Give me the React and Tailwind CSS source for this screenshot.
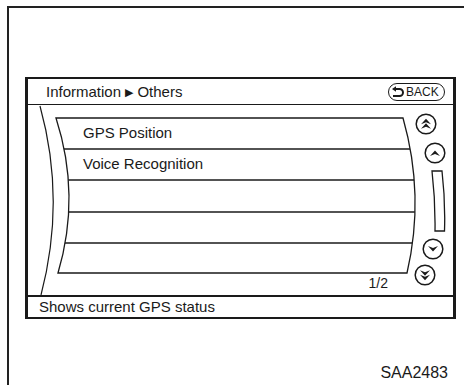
import React from 'react';

const ROW_LINES = [13, 44, 75, 107, 138, 168];
const FRAME =
  'M28 13 L375 13 Q397 90.5 379 168 L30 168 Q53 90.5 28 13 Z';

// arrowhead pointing up, centred on (11, cy)
const arrow = (cy) => `M6 ${cy + 3} L11 ${cy - 2.5} L16 ${cy + 3} L11 ${cy + 1} Z`;

function RoundBtn({ double, down, className }) {
  return (
    <svg width="22" height="22" viewBox="0 0 22 22" className={className}>
      <circle cx="11" cy="11" r="9.8" fill="white" stroke="#1a1a1a" strokeWidth="1.5" />
      <g transform={down ? 'rotate(180 11 11)' : undefined} fill="#1a1a1a">
        {double ? (
          <>
            <path d={arrow(8.2)} />
            <path d={arrow(12.8)} />
          </>
        ) : (
          <path d={arrow(11)} />
        )}
      </g>
    </svg>
  );
}

export default function App() {
  return (
    <div className="w-[464px] h-[385px] bg-white pl-[7px] pt-[6px] overflow-hidden text-[#1a1a1a] font-['Liberation_Sans',Arial,sans-serif]">
      <div className="h-full border-l-2 border-t-2 border-[#222] pl-[16px] pt-[69px]">
        {/* screen */}
        <div className="w-[431px] border-x-[3px] border-y-2 border-[#1a1a1a]">
          {/* header */}
          <div className="h-[26px] border-b border-[#1a1a1a] flex items-center justify-between pl-[18px] pr-[8px]">
            <span className="text-[15px] leading-none">
              Information <span className="text-[11px] relative -top-px">▶</span> Others
            </span>
            <div className="h-[18px] w-[57px] rounded-full border-[1.5px] border-[#1a1a1a] flex items-center pl-[2px] gap-[1px]">
              <svg width="14" height="12" viewBox="0 0 14 12">
                <path d="M4 3 H8.5 A3.5 3.5 0 0 1 8.5 10 H2" fill="none" stroke="#1a1a1a" strokeWidth="2" />
                <path d="M1 3 L5 0.2 L5 5.8 Z" fill="#1a1a1a" />
              </svg>
              <span className="text-[12px] leading-none">BACK</span>
            </div>
          </div>

          {/* list area */}
          <div className="relative h-[190px] flex">
            <svg className="absolute inset-0" width="425" height="190" viewBox="0 0 425 190">
              <defs>
                <clipPath id="rows">
                  <path d={FRAME} />
                </clipPath>
              </defs>
              <path d="M12 1 Q38 95 13 190" fill="none" stroke="#1a1a1a" strokeWidth="1.2" />
              <g clipPath="url(#rows)">
                {ROW_LINES.slice(1, -1).map((y) => (
                  <line key={y} x1="0" x2="425" y1={y} y2={y} stroke="#1a1a1a" strokeWidth="1.3" />
                ))}
              </g>
              <path d={FRAME} fill="none" stroke="#1a1a1a" strokeWidth="1.3" />
            </svg>

            <div className="relative w-[360px] pt-[13px] flex flex-col">
              {['GPS Position', 'Voice Recognition', '', '', ''].map((t, i) => (
                <div key={i} className="h-[31px] flex items-center pl-[55px] text-[15px]">
                  {t}
                </div>
              ))}
              <div className="h-[20px] flex items-center justify-end text-[14px]">1/2</div>
            </div>

            <div className="relative flex-1 flex flex-col items-start pt-[8px]">
              <RoundBtn double className="ml-[27px]" />
              <RoundBtn className="ml-[36px] mt-[7px]" />
              <svg width="15" height="62" viewBox="0 0 15 62" className="ml-[43px] mt-[6px]">
                <path d="M1 1 L11 1 Q14.5 31 13.5 61 L4 61 Q4.5 31 1 1 Z" fill="white" stroke="#1a1a1a" strokeWidth="1.3" />
              </svg>
              <RoundBtn down className="ml-[34px] mt-[6px]" />
              <RoundBtn double down className="ml-[26px] mt-[4px]" />
            </div>
          </div>

          {/* status */}
          <div className="h-[22px] border-t-2 border-[#1a1a1a] flex items-center pl-[11px] text-[15px]">
            Shows current GPS status
          </div>
        </div>

        <div className="mt-[45px] pr-[16px] text-right text-[16px] leading-[18px]">SAA2483</div>
      </div>
    </div>
  );
}
